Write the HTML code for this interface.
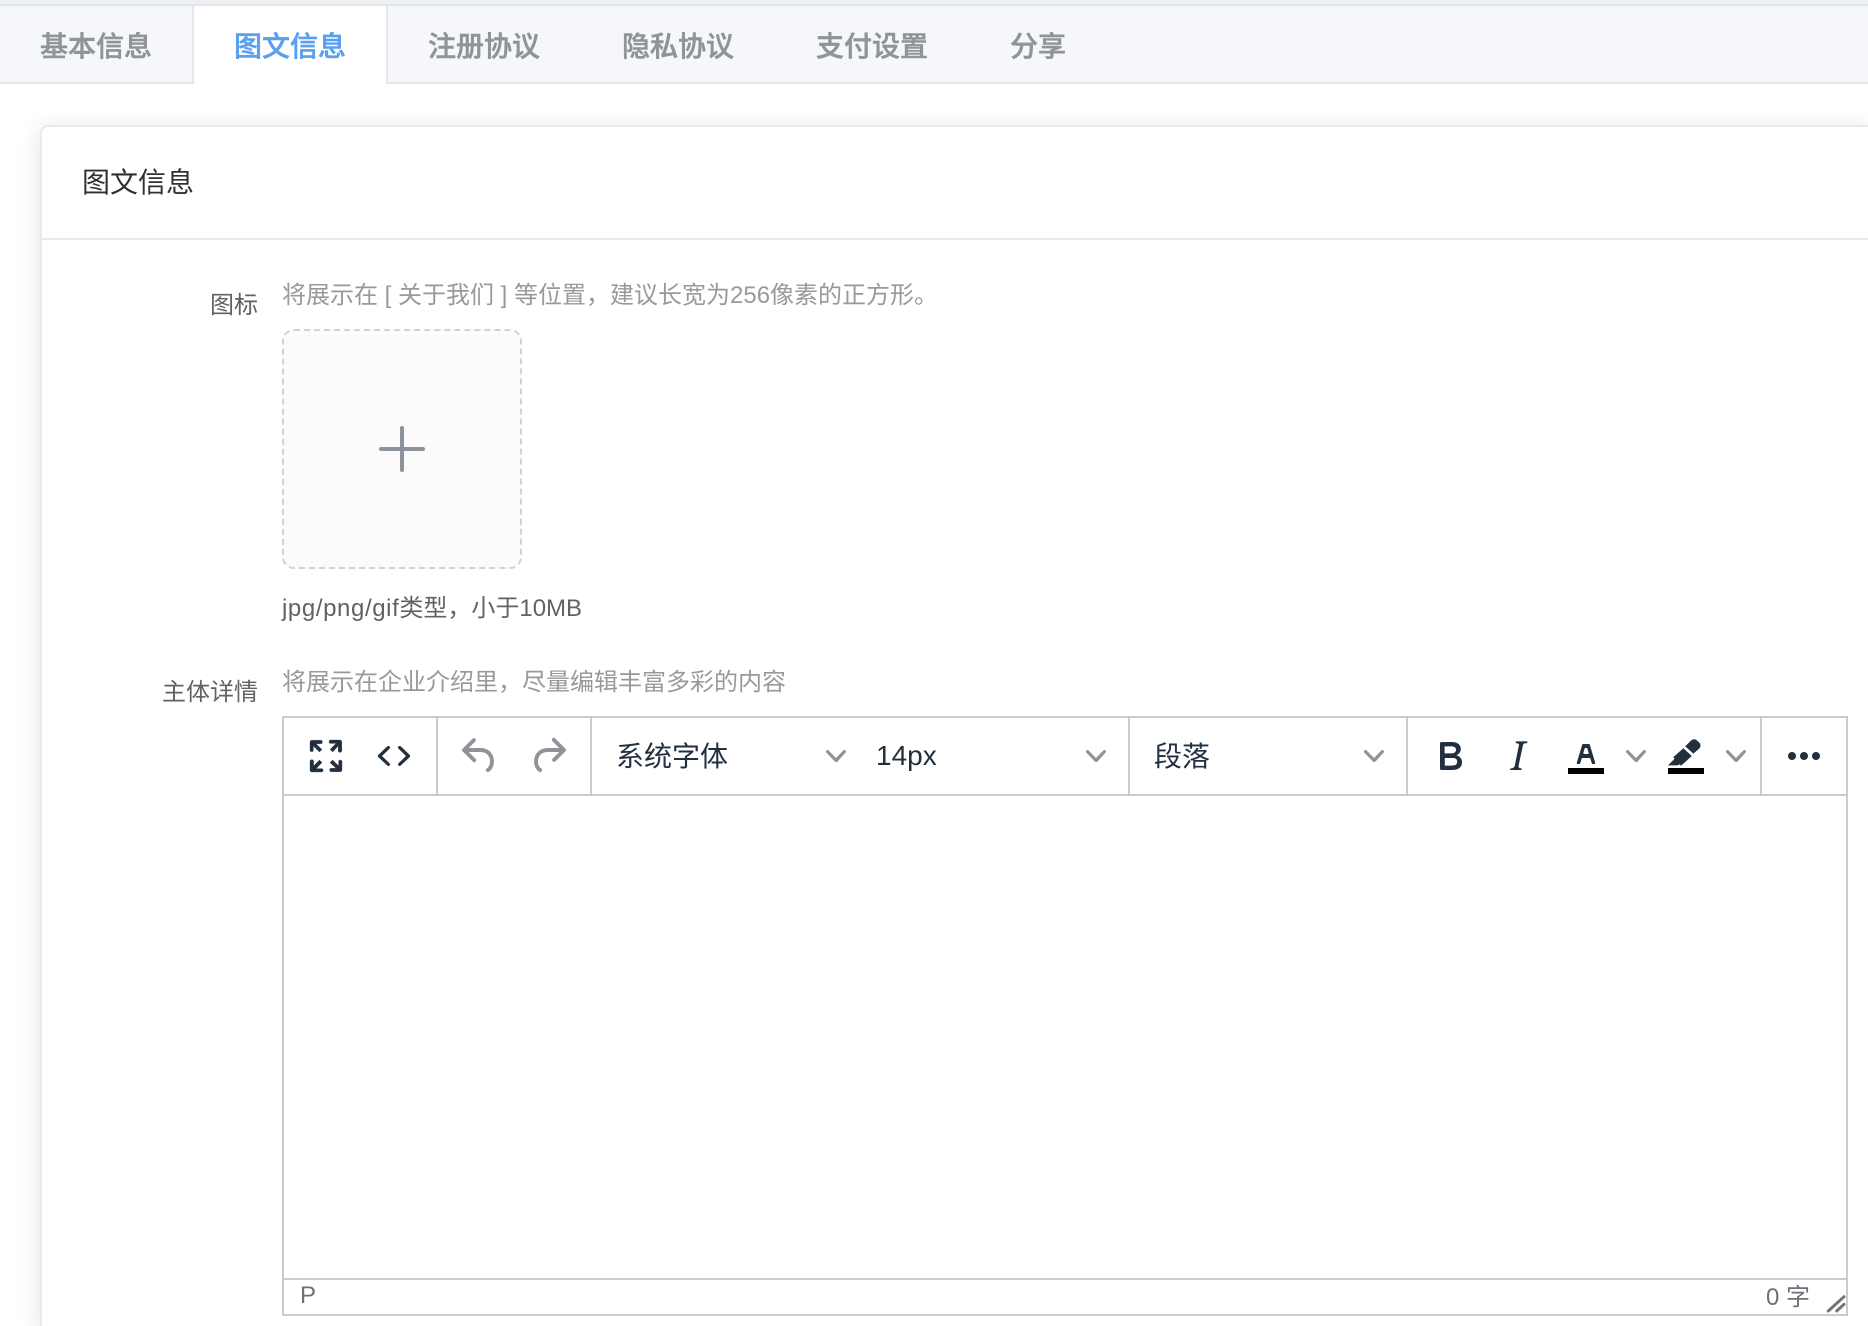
<!DOCTYPE html>
<html lang="zh-CN"><head><meta charset="utf-8"><title>图文信息</title>
<style>
html,body{margin:0;padding:0;width:1868px;height:1326px;overflow:hidden;background:#fff}
body{position:relative;font-family:"Liberation Sans","Noto Sans CJK SC",sans-serif}
.a{position:absolute}
.t{position:absolute;white-space:nowrap;line-height:40px;height:40px}
.tab{font-size:28px;font-weight:500;color:#909399;top:27px;-webkit-text-stroke:.5px currentColor}
.svg{position:absolute;top:732px;width:48px;height:48px}
.l{font-size:24px;color:#606266}
.h{font-size:24px;color:#999}
.e{font-size:28px;color:#222f3e;top:737px}
.ln{position:absolute;background:#ccc}
svg path{fill:#222f3e}
svg.g path{fill:#909499}
</style></head><body>
<div class="a" style="left:0;top:0;width:1868px;height:4px;background:#eef0f4"></div>
<div class="a" style="left:0;top:4px;width:1868px;height:80px;background:#f5f7fb;border-top:2px solid #e1e5ec;border-bottom:2px solid #e4e7ed;box-sizing:border-box"></div>
<div class="a" style="left:192px;top:6px;width:196px;height:78px;background:#fff;border-left:2px solid #e4e7ed;border-right:2px solid #e4e7ed;box-sizing:border-box"></div>
<div class="t tab" style="left:40px">基本信息</div>
<div class="t tab" style="left:234px;color:#5a9ff0">图文信息</div>
<div class="t tab" style="left:428px">注册协议</div>
<div class="t tab" style="left:622px">隐私协议</div>
<div class="t tab" style="left:816px">支付设置</div>
<div class="t tab" style="left:1010px">分享</div>

<div class="a" style="left:40px;top:125px;width:1828px;height:1201px;background:#fff;border:2px solid #e8eaef;border-right:0;border-bottom:0;border-radius:8px 0 0 0;box-shadow:0 4px 24px rgba(0,0,0,.12);box-sizing:border-box"></div>
<div class="a" style="left:42px;top:238px;width:1826px;height:2px;background:#e6e9ef"></div>
<div class="t" style="left:82px;top:163px;font-size:28px;color:#303133">图文信息</div>

<div class="t l" style="left:210px;top:286px">图标</div>
<div class="t h" style="left:282px;top:276px">将展示在 [ 关于我们 ] 等位置，建议长宽为256像素的正方形。</div>
<div class="a" style="left:282px;top:329px;width:240px;height:240px;box-sizing:border-box;background:#fbfbfc;border:2px dashed #d0d2d6;border-radius:12px"></div>
<div class="a" style="left:379px;top:447px;width:46px;height:4px;background:#8c939d;border-radius:2px"></div>
<div class="a" style="left:400px;top:426px;width:4px;height:46px;background:#8c939d;border-radius:2px"></div>
<div class="t l" style="left:282px;top:589px"><span style="letter-spacing:.6px">jpg/png/gif</span>类型，小于10MB</div>

<div class="t l" style="left:162px;top:673px">主体详情</div>
<div class="t h" style="left:282px;top:663px">将展示在企业介绍里，尽量编辑丰富多彩的内容</div>

<div class="a" style="left:282px;top:716px;width:1566px;height:600px;box-sizing:border-box;border:2px solid #ccc"></div>
<div class="ln" style="left:284px;top:794px;width:1562px;height:2px"></div>
<div class="ln" style="left:284px;top:1278px;width:1562px;height:2px"></div>
<div class="ln" style="left:436px;top:718px;width:2px;height:76px"></div>
<div class="ln" style="left:590px;top:718px;width:2px;height:76px"></div>
<div class="ln" style="left:1128px;top:718px;width:2px;height:76px"></div>
<div class="ln" style="left:1406px;top:718px;width:2px;height:76px"></div>
<div class="ln" style="left:1760px;top:718px;width:2px;height:76px"></div>

<svg class="svg" style="left:302px" viewBox="0 0 24 24"><path style="stroke:#222f3e;stroke-width:.15" d="M15.3 10l-1.2-1.3 2.9-3h-2.3a.9.9 0 110-1.7H19c.5 0 .9.4.9.9v4.4a.9.9 0 11-1.8 0V7l-2.8 3zm0 4l3 2.9v-2.3a.9.9 0 011.7 0V19c0 .5-.4.9-.9.9h-4.4a.9.9 0 110-1.8H17l-3-2.8 1.3-1.3zM10 15.3l-2.9 3h2.3a.9.9 0 110 1.7H5a.9.9 0 01-1-.9v-4.4a.9.9 0 111.8 0V17l2.9-3 1.3 1.3zM8.7 10L5.7 7v2.3a.9.9 0 01-1.7 0V5c0-.5.4-.9.9-.9h4.4a.9.9 0 010 1.8H7l3 2.9L8.7 10z"/></svg>
<svg class="svg" style="left:370px" viewBox="0 0 24 24"><path d="M9.8 15.7c.3.3.3.8 0 1-.3.4-.9.4-1.2 0l-4.4-4.1a.8.8 0 010-1.2l4.4-4.2c.3-.3.9-.3 1.2 0 .3.3.3.8 0 1.1L6 12l3.8 3.7zm4.4 0c-.3.3-.3.8 0 1 .3.4.9.4 1.2 0l4.4-4.1a.8.8 0 000-1.2l-4.4-4.2c-.3-.3-.9-.3-1.2 0-.3.3-.3.8 0 1.1L18 12l-3.8 3.7z"/></svg>
<svg class="svg g" style="left:455.5px" viewBox="0 0 24 24"><path d="M6.4 8H12c3.7 0 6.2 2 6.8 5.1.6 2.7-.4 5.6-2.3 6.8a1 1 0 01-1-1.8c1.1-.6 1.8-2.7 1.4-4.6-.5-2.1-2.1-3.5-4.9-3.5H6.4l3.3 3.3a1 1 0 11-1.4 1.4l-5-5a1 1 0 010-1.4l5-5a1 1 0 011.4 1.4L6.4 8z"/></svg>
<svg class="svg g" style="left:523.5px" viewBox="0 0 24 24"><path d="M17.6 10H12c-2.8 0-4.4 1.4-4.9 3.5-.4 2 .3 4 1.4 4.6a1 1 0 11-1 1.8c-1.9-1.2-2.9-4.1-2.3-6.8.6-3 3.1-5.1 6.8-5.1h5.6l-3.3-3.3a1 1 0 111.4-1.4l5 5a1 1 0 010 1.4l-5 5a1 1 0 01-1.4-1.4l3.3-3.3z"/></svg>

<div class="t e" style="left:616px">系统字体</div>
<svg class="svg g" style="left:826px;top:746px;width:20px;height:20px" viewBox="0 0 10 10"><path d="M8.7 2.2c.3-.3.8-.3 1 0 .4.4.4.9 0 1.2L5.7 7.8c-.3.3-.9.3-1.2 0L.2 3.4a.8.8 0 010-1.2c.3-.3.8-.3 1.1 0L5 6l3.7-3.8z"/></svg>
<div class="t e" style="left:876px;top:736px">14px</div>
<svg class="svg g" style="left:1086px;top:746px;width:20px;height:20px" viewBox="0 0 10 10"><path d="M8.7 2.2c.3-.3.8-.3 1 0 .4.4.4.9 0 1.2L5.7 7.8c-.3.3-.9.3-1.2 0L.2 3.4a.8.8 0 010-1.2c.3-.3.8-.3 1.1 0L5 6l3.7-3.8z"/></svg>
<div class="t e" style="left:1154px">段落</div>
<svg class="svg g" style="left:1364px;top:746px;width:20px;height:20px" viewBox="0 0 10 10"><path d="M8.7 2.2c.3-.3.8-.3 1 0 .4.4.4.9 0 1.2L5.7 7.8c-.3.3-.9.3-1.2 0L.2 3.4a.8.8 0 010-1.2c.3-.3.8-.3 1.1 0L5 6l3.7-3.8z"/></svg>

<svg class="svg" style="left:1426px" viewBox="0 0 24 24"><path d="M7.8 19c-.3 0-.5 0-.6-.2l-.2-.5V5.7c0-.2 0-.4.2-.5l.6-.2h5c1.5 0 2.7.3 3.5 1 .7.6 1.1 1.4 1.1 2.5a3 3 0 01-.6 1.9c-.4.6-1 1-1.6 1.2.4.1.9.3 1.3.6s.8.7 1 1.2c.4.4.5 1 .5 1.6 0 1.3-.4 2.3-1.3 3-.8.7-2.1 1-3.8 1H7.8zm5-8.3c.6 0 1.2-.1 1.6-.5.4-.3.6-.7.6-1.3 0-1.1-.8-1.7-2.4-1.7H9.3v3.5h3.5zm.5 6c.7 0 1.3-.1 1.7-.4.4-.4.6-.9.6-1.5s-.2-1-.7-1.4c-.4-.3-1-.4-2-.4H9.4v3.8h4z"/></svg>
<svg class="svg" style="left:1494px" viewBox="0 0 24 24"><path d="M16.7 4.7l-.1.9h-.3c-.6 0-1 0-1.4.3-.3.3-.4.6-.5 1.1l-2.1 9.8v.6c0 .5.4.8 1.4.8h.2l-.2.8H8l.2-.8h.2c1.1 0 1.8-.5 2-1.5l2-9.8.1-.5c0-.6-.4-.8-1.4-.8h-.3l.2-.9h5.8z"/></svg>
<svg class="svg" style="left:1562px" viewBox="0 0 24 24"><path style="fill:#000" d="M3 18h18v3H3z"/><path d="M8.7 16h-.8a.5.5 0 01-.5-.6l2.7-9c.1-.3.3-.4.5-.4h2.8c.2 0 .4.1.5.4l2.7 9a.5.5 0 01-.5.6h-.8a.5.5 0 01-.4-.4l-.7-2.2c0-.3-.3-.4-.5-.4h-3.4c-.2 0-.4.1-.5.4l-.7 2.2c0 .3-.2.4-.4.4zm2.6-7.6l-.6 2a.5.5 0 00.5.6h1.6a.5.5 0 00.5-.6l-.6-2c0-.3-.3-.4-.5-.4h-.4c-.2 0-.4.1-.5.4z"/></svg>
<svg class="svg g" style="left:1626px;top:746px;width:20px;height:20px" viewBox="0 0 10 10"><path d="M8.7 2.2c.3-.3.8-.3 1 0 .4.4.4.9 0 1.2L5.7 7.8c-.3.3-.9.3-1.2 0L.2 3.4a.8.8 0 010-1.2c.3-.3.8-.3 1.1 0L5 6l3.7-3.8z"/></svg>
<svg class="svg" style="left:1662px" viewBox="0 0 24 24"><path style="fill:#000" d="M3 18h18v3H3z"/><path d="M7.7 16.7H3l3.3-3.3-.7-.8 5.1-4.5 4.2 3.9-5.4 4.9-.7-.7z"/><path d="M11.6 7.2l3-3a2 2 0 012.8 0l1.3 1.2a2 2 0 010 2.8l-3 2.6z"/></svg>
<svg class="svg g" style="left:1726px;top:746px;width:20px;height:20px" viewBox="0 0 10 10"><path d="M8.7 2.2c.3-.3.8-.3 1 0 .4.4.4.9 0 1.2L5.7 7.8c-.3.3-.9.3-1.2 0L.2 3.4a.8.8 0 010-1.2c.3-.3.8-.3 1.1 0L5 6l3.7-3.8z"/></svg>
<svg class="svg" style="left:1780px" viewBox="0 0 24 24"><path d="M6 10a2 2 0 00-2 2c0 1.1.9 2 2 2a2 2 0 002-2 2 2 0 00-2-2zm12 0a2 2 0 00-2 2c0 1.1.9 2 2 2a2 2 0 002-2 2 2 0 00-2-2zm-6 0a2 2 0 00-2 2c0 1.1.9 2 2 2a2 2 0 002-2 2 2 0 00-2-2z"/></svg>

<div class="t" style="left:300px;top:1276px;font-size:24px;color:#6b7178">P</div>
<div class="t" style="left:1766px;top:1278px;font-size:24px;color:#6b7178">0 字</div>
<svg class="a" style="left:1826px;top:1294px;width:20px;height:20px" viewBox="0 0 20 20"><path d="M2.3 17L18 2.7" stroke="#70757c" stroke-width="3" stroke-linecap="round" style="fill:none"/><path d="M10.7 17L18 10.3" stroke="#70757c" stroke-width="3" stroke-linecap="round" style="fill:none"/></svg>
</body></html>
